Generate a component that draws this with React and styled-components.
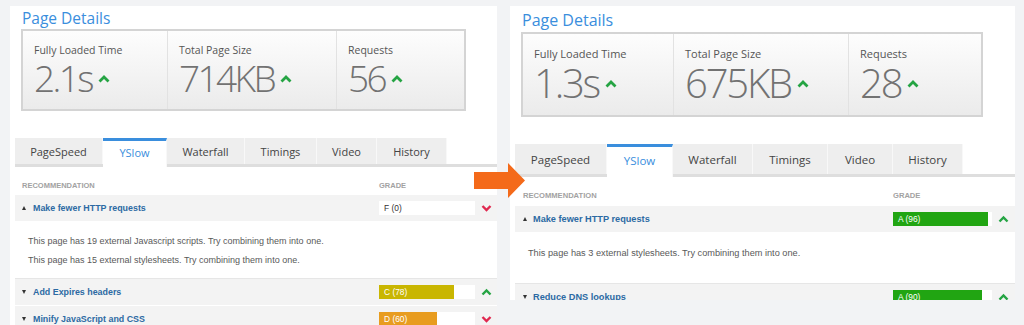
import React from 'react';
import styled, { createGlobalStyle, ThemeProvider } from 'styled-components';

const GlobalStyle = createGlobalStyle`
  html, body { margin: 0; padding: 0; background: #f2f3f5; }
  body {
    width: 1024px; height: 325px; overflow: hidden;
    font-family: "Open Sans", "Liberation Sans", Arial, sans-serif;
  }
`;

const leftTheme = {
  width: 487, height: 330,
  titleSize: 15.5, titlePad: 1, titleLH: 22,
  boxW: 445, boxH: 82, cells: [144, 169, 128],
  labelSize: 10.5, labelPad: 12, numSize: 37, numLH: 42, numLS: -2.6,
  tabsGap: 27, tabH: 26, tabW: [88, 64, 78, 72, 60, 70], tabFont: 11,
  headH: 28, headFont: 7.5, headPad: 7,
  rowH: 26, rowFont: 8.9, triLeft: 7, nameGap: 7,
  barW: 96, barH: 14, chevW: 22,
  detailPadTop: 9.5, detailPadBottom: 8.5, detailFont: 9, detailPad: 13,
};

const rightTheme = {
  width: 505, height: 294,
  titleSize: 16, titlePad: 2, titleLH: 24,
  boxW: 462, boxH: 85, cells: [150, 175, 133],
  labelSize: 11, labelPad: 13, numSize: 40, numLH: 44, numLS: -2.2,
  tabsGap: 27, tabH: 30, tabW: [92, 66, 80, 75, 65, 70], tabFont: 11.5,
  headH: 29, headFont: 7.6, headPad: 8,
  rowH: 26, rowFont: 9.2, triLeft: 8, nameGap: 6,
  barW: 99, barH: 14, chevW: 23,
  detailPadTop: 10.5, detailPadBottom: 20.5, detailFont: 9.2, detailPad: 13,
};

const px = (key) => (p) => `${p.theme[key]}px`;

const Page = styled.div`
  position: relative;
  display: flex;
  align-items: flex-start;
  gap: 13px;
  padding: 6px 0 0 10px;
  height: 325px;
  box-sizing: border-box;
  overflow: hidden;
`;

const Panel = styled.section`
  width: ${px('width')};
  height: ${px('height')};
  background: #ffffff;
  overflow: hidden;
  flex: none;
`;

const Title = styled.h2`
  margin: 0;
  padding: ${px('titlePad')} 0 0 12px;
  font-size: ${px('titleSize')};
  line-height: ${px('titleLH')};
  font-weight: 400;
  color: #3a8edd;
`;

const StatBox = styled.div`
  margin-left: 11px;
  width: ${px('boxW')};
  height: ${px('boxH')};
  box-sizing: border-box;
  border: 2px solid #d4d4d4;
  display: flex;
  background: linear-gradient(#fdfdfd, #ebebeb);
`;

const StatCell = styled.div`
  width: ${(p) => p.theme.cells[p.$i]}px;
  box-sizing: border-box;
  padding: ${px('labelPad')} 0 0 11px;
  border-left: ${(p) => (p.$i === 0 ? 'none' : '1px solid #e2e2e2')};
  display: flex;
  flex-direction: column;
`;

const StatLabel = styled.div`
  font-size: ${px('labelSize')};
  line-height: 14px;
  color: #555;
`;

const StatValueRow = styled.div`
  display: flex;
  align-items: center;
  height: ${px('numLH')};
`;

const StatValue = styled.span`
  font-size: ${px('numSize')};
  line-height: ${px('numLH')};
  font-weight: 300;
  letter-spacing: ${(p) => p.theme.numLS}px;
  color: #727272;
`;

const UpCaret = styled.svg`
  margin-left: 6px;
  margin-top: 2px;
  flex: none;
`;

const TabBar = styled.nav`
  margin: ${px('tabsGap')} 0 0 5px;
  display: flex;
  align-items: flex-end;
  border-bottom: 3px solid #dedede;
`;

const Tab = styled.div`
  width: ${(p) => p.theme.tabW[p.$i]}px;
  height: ${(p) => p.theme.tabH + (p.$active ? 3 : 0)}px;
  margin-bottom: ${(p) => (p.$active ? '-3px' : '0')};
  box-sizing: border-box;
  display: flex;
  align-items: center;
  justify-content: center;
  padding-bottom: ${(p) => (p.$active ? '3px' : '0')};
  font-size: ${px('tabFont')};
  color: ${(p) => (p.$active ? '#3a8edd' : '#444')};
  background: ${(p) => (p.$active ? '#fff' : '#eeeeee')};
  border-top: ${(p) => (p.$active ? '3px solid #3a8edd' : 'none')};
  border-right: 1px solid #f8f8f8;
`;

const Table = styled.div`
  margin-left: 5px;
  font-family: "Liberation Sans", Arial, sans-serif;
`;

const HeadRow = styled.div`
  display: flex;
  height: ${px('headH')};
  box-sizing: border-box;
  padding-top: 14px;
`;

const HeadCell = styled.div`
  flex: ${(p) => (p.$grow ? 1 : 'none')};
  width: ${(p) => (p.$grow ? 'auto' : `${p.theme.barW + p.theme.chevW}px`)};
  padding-left: ${(p) => (p.$grow ? `${p.theme.headPad}px` : '0')};
  font-size: ${px('headFont')};
  line-height: 10px;
  font-weight: 700;
  text-transform: uppercase;
  color: #a2a2a2;
`;

const Row = styled.div`
  display: flex;
  align-items: center;
  height: ${px('rowH')};
  background: #f3f3f3;
  border-bottom: 1px solid #ffffff;
`;

const RowName = styled.div`
  flex: 1;
  display: flex;
  align-items: center;
  padding-left: ${px('triLeft')};
  gap: ${px('nameGap')};
  font-size: ${px('rowFont')};
  font-weight: 700;
  color: #2c6aa3;
`;

const Triangle = styled.span`
  width: 0;
  height: 0;
  border-left: 2.5px solid transparent;
  border-right: 2.5px solid transparent;
  ${(p) => (p.$up ? 'border-bottom: 4px solid #333;' : 'border-top: 4px solid #333;')}
`;

const GradeBar = styled.div`
  position: relative;
  width: ${px('barW')};
  height: ${px('barH')};
  background: #ffffff;
  flex: none;
`;

const GradeFill = styled.div`
  height: 100%;
  background: ${(p) => p.$color};
`;

const GradeText = styled.span`
  position: absolute;
  left: 5px;
  top: 0;
  line-height: ${px('barH')};
  font-size: 8.4px;
  color: ${(p) => (p.$light ? '#ffffff' : '#333333')};
`;

const ChevCell = styled.div`
  width: ${px('chevW')};
  display: flex;
  justify-content: center;
  flex: none;
`;

const Detail = styled.div`
  padding: ${px('detailPadTop')} 0 ${px('detailPadBottom')} ${px('detailPad')};
  border-bottom: 1px solid #e6e6e6;
  font-size: ${px('detailFont')};
  line-height: 19px;
  color: #595959;
`;

const Arrow = styled.svg`
  position: absolute;
  left: 474px;
  top: 162px;
`;

const Caret = () => (
  <UpCaret width="12" height="8" viewBox="0 0 12 8">
    <polyline points="1.5,6.5 6,2 10.5,6.5" fill="none" stroke="#25a443" strokeWidth="2.8" />
  </UpCaret>
);

const Chevron = ({ up }) => (
  <svg width="11" height="8" viewBox="0 0 11 8">
    {up ? (
      <polyline points="1.5,6.5 5.5,2.5 9.5,6.5" fill="none" stroke="#25a443" strokeWidth="2.4" />
    ) : (
      <polyline points="1.5,2 5.5,6 9.5,2" fill="none" stroke="#e0284f" strokeWidth="2.4" />
    )}
  </svg>
);

const TABS = ['PageSpeed', 'YSlow', 'Waterfall', 'Timings', 'Video', 'History'];

const PanelView = ({ stats, rows }) => (
  <Panel>
    <Title>Page Details</Title>
    <StatBox>
      {stats.map((s, i) => (
        <StatCell key={s.label} $i={i}>
          <StatLabel>{s.label}</StatLabel>
          <StatValueRow>
            <StatValue>{s.value}</StatValue>
            <Caret />
          </StatValueRow>
        </StatCell>
      ))}
    </StatBox>
    <TabBar>
      {TABS.map((name, i) => (
        <Tab key={name} $i={i} $active={name === 'YSlow'}>{name}</Tab>
      ))}
    </TabBar>
    <Table>
      <HeadRow>
        <HeadCell $grow>Recommendation</HeadCell>
        <HeadCell>Grade</HeadCell>
      </HeadRow>
      {rows.map((r) => (
        <React.Fragment key={r.name}>
          <Row>
            <RowName>
              <Triangle $up={!!r.details} />
              {r.name}
            </RowName>
            <GradeBar>
              <GradeFill $color={r.color} style={{ width: `${r.score}%` }} />
              <GradeText $light={r.score > 0}>{r.grade}</GradeText>
            </GradeBar>
            <ChevCell>
              <Chevron up={r.up} />
            </ChevCell>
          </Row>
          {r.details && (
            <Detail>
              {r.details.map((d) => (
                <div key={d}>{d}</div>
              ))}
            </Detail>
          )}
        </React.Fragment>
      ))}
    </Table>
  </Panel>
);

const leftStats = [
  { label: 'Fully Loaded Time', value: '2.1s' },
  { label: 'Total Page Size', value: '714KB' },
  { label: 'Requests', value: '56' },
];
const rightStats = [
  { label: 'Fully Loaded Time', value: '1.3s' },
  { label: 'Total Page Size', value: '675KB' },
  { label: 'Requests', value: '28' },
];

const leftRows = [
  {
    name: 'Make fewer HTTP requests', grade: 'F (0)', score: 0, color: '#ffffff', up: false,
    details: [
      'This page has 19 external Javascript scripts. Try combining them into one.',
      'This page has 15 external stylesheets. Try combining them into one.',
    ],
  },
  { name: 'Add Expires headers', grade: 'C (78)', score: 78, color: '#c9b601', up: true },
  { name: 'Minify JavaScript and CSS', grade: 'D (60)', score: 60, color: '#e89c1f', up: false },
];

const rightRows = [
  {
    name: 'Make fewer HTTP requests', grade: 'A (96)', score: 96, color: '#21a512', up: true,
    details: ['This page has 3 external stylesheets. Try combining them into one.'],
  },
  { name: 'Reduce DNS lookups', grade: 'A (90)', score: 90, color: '#21a512', up: true },
];

export default function App() {
  return (
    <>
      <GlobalStyle />
      <Page>
        <ThemeProvider theme={leftTheme}>
          <PanelView stats={leftStats} rows={leftRows} />
        </ThemeProvider>
        <ThemeProvider theme={rightTheme}>
          <PanelView stats={rightStats} rows={rightRows} />
        </ThemeProvider>
        <Arrow width="52" height="37" viewBox="0 0 52 37">
          <polygon points="0,10 34,10 34,1 51,18.5 34,36 34,27 0,27" fill="#f46a1a" />
        </Arrow>
      </Page>
    </>
  );
}
